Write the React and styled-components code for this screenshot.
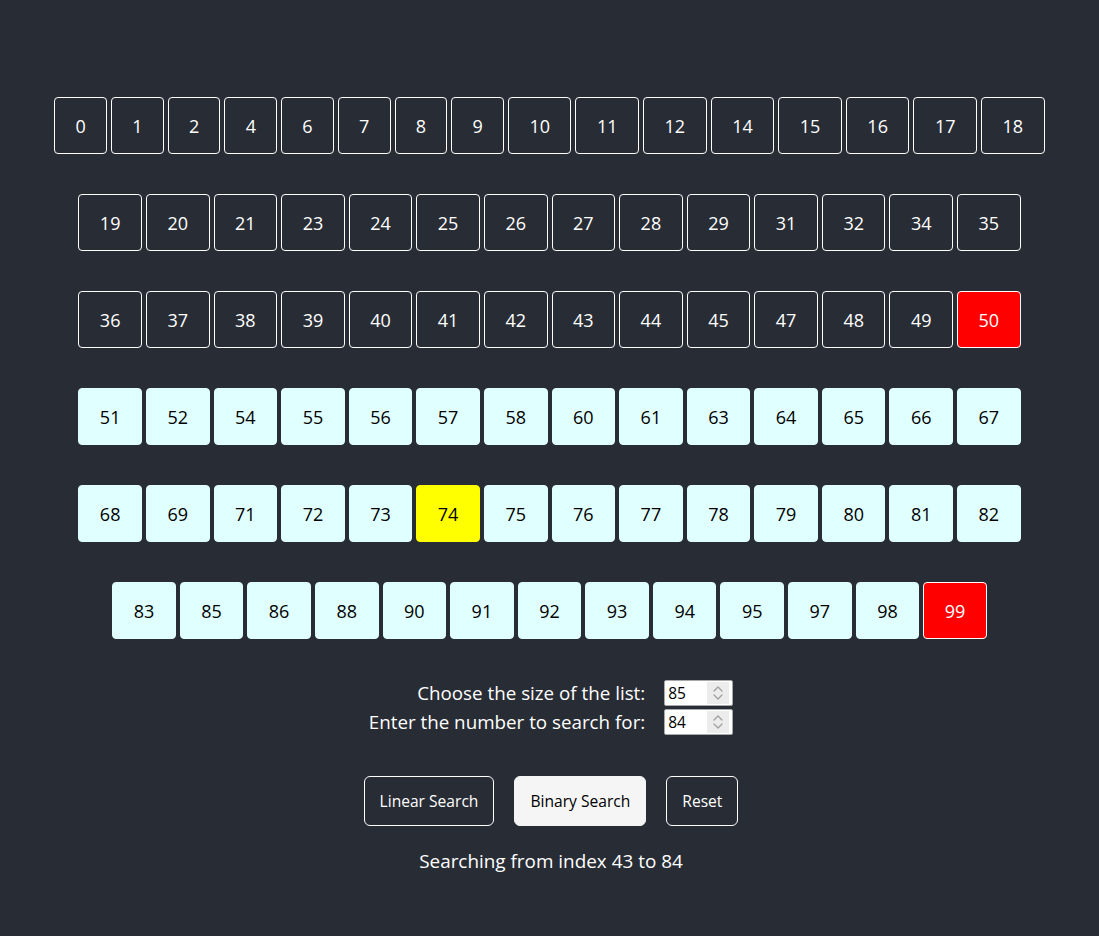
import React, {useState} from "react";
import styled, {createGlobalStyle} from "styled-components";

const GlobalStyle = createGlobalStyle`
 body {
  margin: 0;
  background: #282c34;
  font-family: "Open Sans", "Noto Sans", sans-serif;
  color: #ffffff;
 }
`;

const Page = styled.div`
 min-height: 936px;
 padding-top: 77px;
 box-sizing: border-box;
 display: flex;
 flex-direction: column;
 align-items: center;
`;

const List = styled.div`
 width: 1000px;
 display: flex;
 flex-wrap: wrap;
 justify-content: center;
`;

const Box = styled.div`
 box-sizing: border-box;
 width: ${({wide}) => (wide ? "63.6px" : "52.7px")};
 height: 57px;
 margin: 20px 2px;
 display: flex;
 align-items: center;
 justify-content: center;
 border-radius: 4px;
 border: 1px solid #ffffff;
 font-size: 18px;
 background: ${({state}) =>
  state === "target"
   ? "#ffff00"
   : state === "bound"
   ? "#ff0000"
   : state === "active"
   ? "#e0ffff"
   : "transparent"};
 color: ${({state}) =>
  state === "target" || state === "active" ? "#000000" : "#ffffff"};
 border-color: ${({state}) =>
  state === "active" ? "#e0ffff" : state === "target" ? "#ffff00" : "#ffffff"};
`;

const Form = styled.div`
 margin-top: 21px;
 margin-left: 3px;
 display: grid;
 grid-template-columns: auto auto;
 column-gap: 19px;
 row-gap: 3px;
 align-items: center;
`;

const Label = styled.label`
 text-align: right;
 font-size: 18.8px;
 line-height: 26px;
`;

const InputWrap = styled.div`
 position: relative;
 width: 69px;
 height: 26px;
`;

const NumberInput = styled.input`
 box-sizing: border-box;
 width: 100%;
 height: 100%;
 padding: 0 3px;
 font-family: "Open Sans", "Noto Sans", sans-serif;
 font-size: 15.5px;
 border: 1px solid #a8a8a8;
 border-radius: 2px;
 background: #ffffff;
 color: #000000;
 outline: none;
 &::-webkit-inner-spin-button,
 &::-webkit-outer-spin-button {
  -webkit-appearance: none;
  margin: 0;
 }
`;

// spinner drawn over the input so it shows like the reference
const Spinner = styled.div`
 position: absolute;
 top: 2px;
 right: 4px;
 width: 22px;
 height: 22px;
 background: #ececec;
 display: flex;
 align-items: center;
 justify-content: center;
 pointer-events: none;
`;

const Buttons = styled.div`
 margin-top: 41px;
 margin-left: 3px;
 display: flex;
 gap: 20px;
`;

const Button = styled.button`
 height: 50px;
 padding: 0 15px;
 border-radius: 6px;
 font-family: "Open Sans", "Noto Sans", sans-serif;
 font-size: 15.6px;
 cursor: pointer;
 border: 1px solid ${({active}) => (active ? "#f5f5f5" : "#ffffff")};
 background: ${({active}) => (active ? "#f5f5f5" : "transparent")};
 color: ${({active}) => (active ? "#000000" : "#ffffff")};
`;

const Status = styled.p`
 margin: 22px 0 0 3px;
 font-size: 18.9px;
 line-height: 26px;
`;

// the sorted list from the screenshot
const VALUES = [
 0, 1, 2, 4, 6, 7, 8, 9, 10, 11, 12, 14, 15, 16, 17, 18, 19, 20, 21, 23, 24,
 25, 26, 27, 28, 29, 31, 32, 34, 35, 36, 37, 38, 39, 40, 41, 42, 43, 44, 45,
 47, 48, 49, 50, 51, 52, 54, 55, 56, 57, 58, 60, 61, 63, 64, 65, 66, 67, 68,
 69, 71, 72, 73, 74, 75, 76, 77, 78, 79, 80, 81, 82, 83, 85, 86, 88, 90, 91,
 92, 93, 94, 95, 97, 98, 99,
];

const SpinIcon = () => (
 <svg width='12' height='18' viewBox='0 0 12 18' fill='none'>
  <path
   d='M2 7 L6 3 L10 7 M2 11 L6 15 L10 11'
   stroke='#a0a0a0'
   strokeWidth='1.3'
   strokeLinecap='round'
   strokeLinejoin='round'
  />
 </svg>
);

const NumberField = ({id, value, onChange}) => (
 <InputWrap>
  <NumberInput id={id} type='number' value={value} onChange={onChange} />
  <Spinner>
   <SpinIcon />
  </Spinner>
 </InputWrap>
);

const App = () => {
 const [size, setSize] = useState(85);
 const [target, setTarget] = useState(84);
 const low = 43;
 const high = 84;
 const mid = 63;

 const stateOf = index => {
  if (index === low || index === high) return "bound";
  if (index === mid) return "target";
  if (index > low && index < high) return "active";
  return "idle";
 };

 return (
  <Page>
   <GlobalStyle />
   <List>
    {VALUES.map((value, index) => (
     <Box key={index} wide={value > 9} state={stateOf(index)}>
      {value}
     </Box>
    ))}
   </List>

   <Form>
    <Label htmlFor='size'>Choose the size of the list:</Label>
    <NumberField
     id='size'
     value={size}
     onChange={e => setSize(e.target.value)}
    />
    <Label htmlFor='target'>Enter the number to search for:</Label>
    <NumberField
     id='target'
     value={target}
     onChange={e => setTarget(e.target.value)}
    />
   </Form>

   <Buttons>
    <Button>Linear Search</Button>
    <Button active>Binary Search</Button>
    <Button>Reset</Button>
   </Buttons>

   <Status>
    Searching from index {low} to {high}
   </Status>
  </Page>
 );
};

export default App;
